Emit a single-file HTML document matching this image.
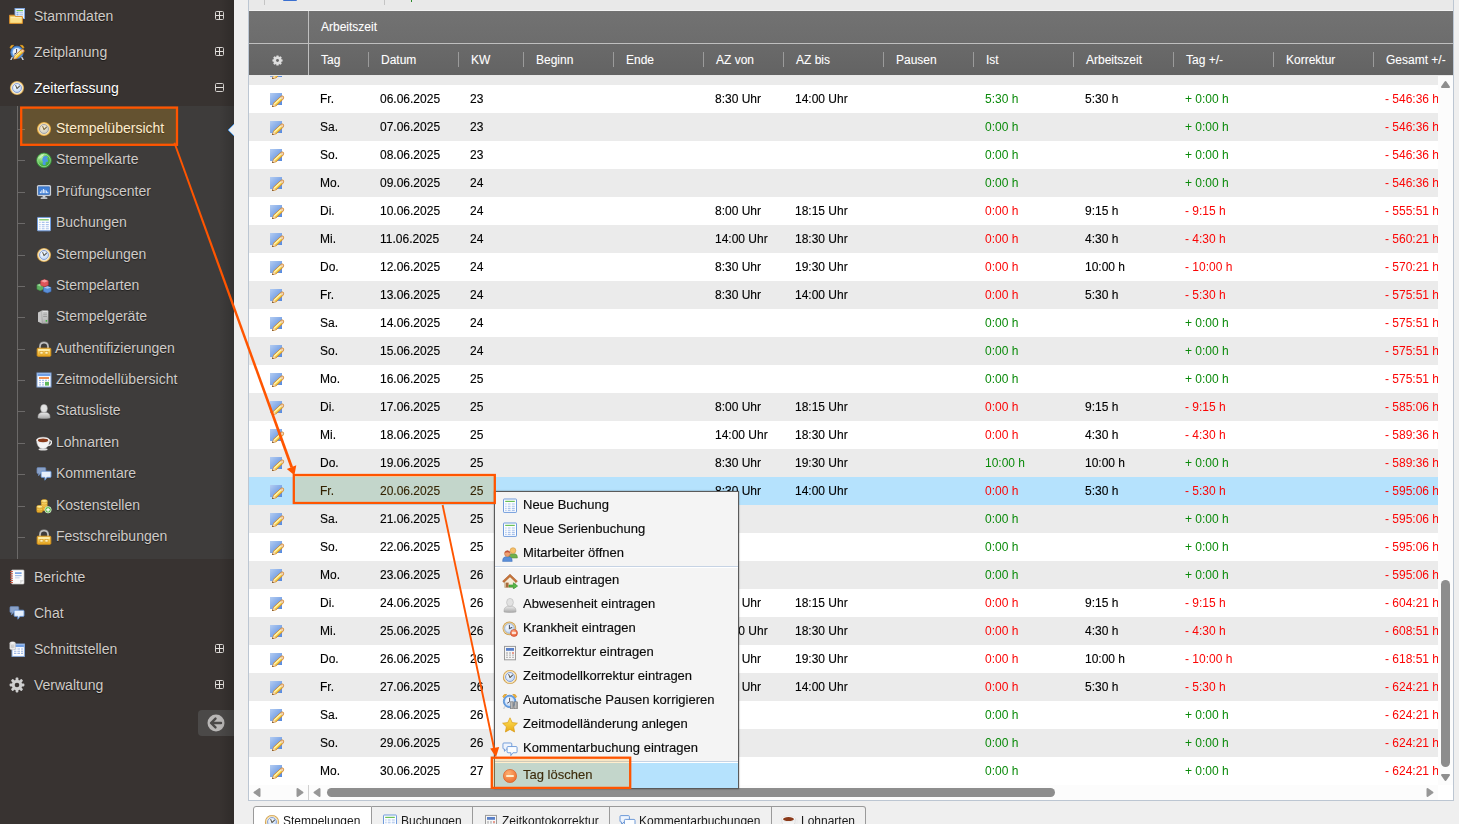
<!DOCTYPE html>
<html lang="de"><head><meta charset="utf-8"><title>Stempelübersicht</title>
<style>
*{box-sizing:border-box;margin:0;padding:0}
html,body{width:1459px;height:824px;overflow:hidden;background:#efefef;font-family:"Liberation Sans",sans-serif;}
body{position:relative}
svg{display:block;overflow:visible}
/* ---------- sidebar ---------- */
#side{position:absolute;left:0;top:0;width:234px;height:824px;background:#383331;overflow:hidden}
#side .sub{position:absolute;left:0;top:106px;width:234px;height:453px;background:#3e3c3b}
#side .vline{position:absolute;left:17px;top:106px;width:1px;height:453px;background:#6b6968}
.m{position:absolute;left:34px;font-size:14px;line-height:18px;color:#d0ccc8;white-space:nowrap;text-shadow:0 1px 1px rgba(0,0,0,.55)}
.m.act{color:#fff}
.mi{position:absolute;left:8px;width:18px;height:18px}
.pm{position:absolute;left:215px;width:9px;height:9px;border:1px solid #d8d5d2;border-radius:1.5px}
.pm:before{content:"";position:absolute;left:0;top:3px;width:7px;height:1px;background:#e6e3e0}
.pm.plus:after{content:"";position:absolute;left:3px;top:0;width:1px;height:7px;background:#e6e3e0}
.s{position:absolute;left:56px;font-size:14px;line-height:18px;color:#cfcbc8;white-space:nowrap;text-shadow:0 1px 1px rgba(0,0,0,.5)}
.s.act{color:#fff}
.si{position:absolute;left:35px;width:17px;height:17px}
.tk{position:absolute;left:18px;width:7px;height:1px;background:#6b6968}
#collapse{position:absolute;left:198px;top:710px;width:36px;height:26px;background:#4b4948;border-radius:4px 0 0 4px}
#ptr{position:absolute;left:226px;top:122px;width:8px;height:16px}
#side .shade{position:absolute;left:219px;top:0;width:15px;height:824px;background:linear-gradient(90deg,rgba(0,0,0,0),rgba(0,0,0,.16))}
/* ---------- content ---------- */
#content{position:absolute;left:0;top:0;width:1459px;height:824px;pointer-events:none}
#panel{position:absolute;left:248px;top:-1px;width:1206px;height:802px;border:1px solid #bcc6d2;background:#e9e9e9}
#hdr{position:absolute;left:249px;top:11px;width:1204px;height:64px;background:linear-gradient(#727272,#6d6d6d 48%,#6a6a6a 52%,#636363);}
#hdr .hl{position:absolute;left:0;top:32px;width:1204px;height:1px;background:#bfbfbf}
#hdr .vl{position:absolute;left:59px;top:0;width:1px;height:64px;background:#bfbfbf}
#hdr .d{position:absolute;top:41px;width:1px;height:15px;background:#9b9b9b}
.h{position:absolute;font-size:12px;line-height:14px;color:#fff;white-space:nowrap;text-shadow:0 0 1px rgba(255,255,255,.25)}
#rows{will-change:transform;position:absolute;left:0;top:0;width:1459px;height:824px;clip:rect(76px,1438px,785px,249px)}
.row{-webkit-text-stroke:.12px;position:absolute;left:249px;width:1189px;height:28px;font-size:12px;line-height:28px;color:#000}
.row.even{background:#fff}
.row.odd{background:#ebebeb}
.row.sel{background:#b5e2fd}
.row .ed{position:absolute;left:20px;top:7px}
.c{position:absolute;top:0;margin-left:-249px;white-space:nowrap}
.c.g{color:#0a8a0a;-webkit-text-stroke:0}
.c.r{color:#fb0505;-webkit-text-stroke:0}
/* scrollbars */
.sbar{position:absolute;background:#fcfcfc}
.thumb{position:absolute;background:#8d8d8d;border-radius:5px}
.tri{position:absolute;width:0;height:0}
/* tabs */
.tab{position:absolute;top:806px;height:22px;background:#f0f0f0;border:1px solid #9a9a9a;border-left:none;font-size:12px;line-height:28px;color:#1a1a1a;white-space:nowrap}
.tab.first{border-left:1px solid #9a9a9a;border-radius:3px 0 0 0;background:#fff}
.tab.last{border-radius:0 3px 0 0}
.tab svg{position:absolute;top:7px}
.tab span{position:absolute;top:0}
/* context menu */
#menu{will-change:transform;position:absolute;left:494px;top:491px;width:245px;height:298px;background:#f4f4f4;border:1px solid #5a5a5a;box-shadow:0 0 1.5px rgba(0,0,0,.45)}
#menu .it{-webkit-text-stroke:.15px;position:absolute;left:28px;font-size:13px;line-height:16px;color:#0c0c0c;white-space:nowrap}
#menu .ic{position:absolute;left:7px;width:16px;height:16px}
#menu .sep{position:absolute;left:0;width:243px;height:2px;border-top:1px solid #c6d3e4;background:#fff}
#menu .hi{position:absolute;left:0;top:271px;width:243px;height:25px;background:#b5e2fd}
/* annotations */
#anno{position:absolute;left:0;top:0;width:1459px;height:824px;pointer-events:none}

</style></head>
<body>
<svg width="0" height="0" style="position:absolute">
<defs>
<linearGradient id="gBlue" x1="0" y1="0" x2="1" y2="1"><stop offset="0" stop-color="#b4cdf2"/><stop offset="1" stop-color="#5488de"/></linearGradient>
<linearGradient id="gPencil" x1="0" y1="0" x2="1" y2="1"><stop offset="0" stop-color="#fff3a0"/><stop offset="1" stop-color="#e6a52a"/></linearGradient>
<radialGradient id="gFace" cx=".4" cy=".35" r=".7"><stop offset="0" stop-color="#ffffff"/><stop offset="1" stop-color="#b9d3f5"/></radialGradient>
<radialGradient id="gGlobe" cx=".35" cy=".3" r=".8"><stop offset="0" stop-color="#b6f0a0"/><stop offset=".6" stop-color="#4cb848"/><stop offset="1" stop-color="#2c8a30"/></radialGradient>
<linearGradient id="gGold" x1="0" y1="0" x2="0" y2="1"><stop offset="0" stop-color="#ffe98a"/><stop offset="1" stop-color="#e9a820"/></linearGradient>
<linearGradient id="gGrey" x1="0" y1="0" x2="0" y2="1"><stop offset="0" stop-color="#e9e9e9"/><stop offset="1" stop-color="#a9a9a9"/></linearGradient>
<linearGradient id="gStar" x1="0" y1="0" x2="0" y2="1"><stop offset="0" stop-color="#ffe45c"/><stop offset="1" stop-color="#e8a914"/></linearGradient>
<radialGradient id="gRed" cx=".4" cy=".3" r=".8"><stop offset="0" stop-color="#ffb08c"/><stop offset="1" stop-color="#e65a34"/></radialGradient>

<!-- row edit icon 18x16 : blue square + pencil -->
<symbol id="i-edit" viewBox="0 0 18 16">
 <rect x="1" y="1" width="12" height="12" fill="url(#gBlue)"/>
 <g transform="translate(3.1,14.9) rotate(-42.5)">
  <path d="M0 0 L3.4 -2.1 H13.2 Q15.6 -2.1 15.6 0 Q15.6 2.1 13.2 2.1 H3.4 Z" fill="#cf8428"/>
  <path d="M3.6 -1.3 H12.4 V1.3 H3.6 Z" fill="#f6dc58"/>
  <path d="M3.6 -1.3 H12.4 V-.1 H3.6 Z" fill="#fff6b4"/>
  <path d="M3.6 .7 H12.4 V1.3 H3.6 Z" fill="#ecbc3a"/>
  <path d="M12.4 -1.4 H13.4 V1.4 H12.4 Z" fill="#ece6de"/>
  <path d="M13.4 -1.4 Q14.9 -1.4 14.9 0 Q14.9 1.4 13.4 1.4 Z" fill="#f8d2b4"/>
  <path d="M.9 0 L3.6 -1.5 V1.5 Z" fill="#f8e2bc"/>
  <path d="M0 0 L1.5 -.85 V.85 Z" fill="#5a3a1a"/>
 </g>
</symbol>

<!-- clock (gold ring) -->
<symbol id="i-clock" viewBox="0 0 16 16">
 <circle cx="8" cy="8" r="7.1" fill="#c8943e"/>
 <circle cx="8" cy="8" r="6.4" fill="#f1d9a2"/>
 <circle cx="8" cy="8" r="5.5" fill="#fbf3dc"/>
 <circle cx="8" cy="8" r="4.5" fill="url(#gFace)" stroke="#7f98d4" stroke-width=".9"/>
 <path d="M6.8 5.6 L8 8.6 L10.5 6.2" fill="none" stroke="#5a5a52" stroke-width="1.1" stroke-linecap="round" stroke-linejoin="round"/>
</symbol>

<!-- folder + document (Stammdaten) -->
<symbol id="i-folder" viewBox="0 0 16 16">
 <rect x="6" y=".5" width="9.5" height="10" fill="#eaf2fd" stroke="#7da4dc" stroke-width="1"/>
 <rect x="7.5" y="2" width="6.5" height="1.2" fill="#6fbf5a"/>
 <rect x="7.5" y="4.3" width="2" height="1" fill="#5a8fdc"/><rect x="10.3" y="4.3" width="3.7" height="1" fill="#9fbbe6"/>
 <rect x="7.5" y="6.3" width="2" height="1" fill="#5a8fdc"/><rect x="10.3" y="6.3" width="3.7" height="1" fill="#9fbbe6"/>
 <path d="M.6 7.2 H5.5 L6.6 8.6 H13.4 V15.4 H.6 Z" fill="#f6cf62" stroke="#d98e2c" stroke-width="1"/>
 <rect x="1.4" y="10" width="11.2" height="4.6" fill="#fbe08a"/>
 <rect x="1.4" y="9.2" width="11.2" height=".9" fill="#fff3c2"/>
</symbol>

<!-- alarm clock + pencil (Zeitplanung) -->
<symbol id="i-alarm" viewBox="0 0 16 16">
 <path d="M1 3.5 Q1.8 .6 4.8 1.2 L2 4.6 Z" fill="#f0b030" stroke="#c98a1a" stroke-width=".6"/>
 <path d="M15 3.5 Q14.2 .6 11.2 1.2 L14 4.6 Z" fill="#f0b030" stroke="#c98a1a" stroke-width=".6"/>
 <path d="M3.2 13.2 L2 15.6 M12.8 13.2 L14 15.6" stroke="#cfd5dc" stroke-width="1.4" stroke-linecap="round"/>
 <circle cx="8" cy="8.4" r="6.2" fill="#5f9be0" stroke="#3d78c6" stroke-width=".8"/>
 <circle cx="8" cy="8.4" r="4.4" fill="url(#gFace)"/>
 <path d="M7.6 5.4 V8.8 L5.6 10" fill="none" stroke="#445" stroke-width="1" stroke-linecap="round"/>
 <g transform="translate(4.2,15.4) rotate(-42)">
  <path d="M0 0 L3 -2 H12.4 Q14.6 -2 14.6 0 Q14.6 2 12.4 2 H3 Z" fill="#cf7f22"/>
  <path d="M3.2 -1.2 H11.6 V1.2 H3.2 Z" fill="#f5d23e"/>
  <path d="M3.2 -1.2 H11.6 V-.2 H3.2 Z" fill="#fff2a0"/>
  <path d="M11.6 -1.3 Q13.9 -1.3 13.9 0 Q13.9 1.3 11.6 1.3 Z" fill="#f6c9a8"/>
  <path d="M.9 0 L3.2 -1.4 V1.4 Z" fill="#f6dcb0"/>
 </g>
</symbol>

<!-- globe (Stempelkarte) -->
<symbol id="i-globe" viewBox="0 0 16 16">
 <circle cx="8" cy="8.4" r="7.3" fill="url(#gGlobe)" stroke="#3a9a3c" stroke-width=".8"/>
 <circle cx="8" cy="8.4" r="6.3" fill="none" stroke="#d6f8c8" stroke-width=".7" opacity=".7"/>
 <path d="M8.6 4 Q10.8 3.6 12.2 5.2 L10.4 6.4 L11.8 7.6 Q12.6 9.4 11.2 10.2 L10 9.4 Q9 10.8 9.8 12.4 Q8.4 13.8 6.8 12.6 Q6 11 7.2 9.8 Q5.8 8.6 6.4 6.8 Q6.8 4.8 8.6 4 Z" fill="#4a96e6"/>
 <path d="M3.4 6.4 Q4.6 3.6 7.6 2.8" fill="none" stroke="#f0ffe6" stroke-width="1" opacity=".8"/>
</symbol>

<!-- monitor chart (Pruefungscenter) -->
<symbol id="i-monitor" viewBox="0 0 16 16">
 <rect x="1.4" y="2.4" width="13.2" height="10" rx=".8" fill="#f4f7fb" stroke="#d8e0ea" stroke-width=".8"/>
 <rect x="2.6" y="3.6" width="10.8" height="7.6" fill="#3f7fd6" stroke="#2c5ea8" stroke-width=".7"/>
 <path d="M4.4 10 V8.4 M5.9 10 V7 M7.4 10 V5.8 M8.9 10 V6.6 M10.4 10 V7.4 M11.8 10 V8.6" stroke="#eaf2ff" stroke-width="1"/>
 <rect x="6.6" y="12.6" width="2.8" height="1.8" fill="#cdd3db"/>
 <rect x="4.6" y="14.2" width="6.8" height="1.3" rx=".5" fill="#e6eaf0"/>
</symbol>

<!-- table (Buchungen) -->
<symbol id="i-table" viewBox="0 0 16 16">
 <rect x="1" y="1" width="14" height="14" fill="#fff" stroke="#86a9dc" stroke-width="1"/>
 <rect x="1.5" y="1.5" width="13" height="3" fill="#8db3ee"/>
 <path d="M3 6.5 H5.2 M6.4 6.5 H9.6 M10.8 6.5 H13 M3 8.7 H5.2 M6.4 8.7 H9.6 M10.8 8.7 H13 M3 10.9 H5.2 M6.4 10.9 H9.6 M10.8 10.9 H13 M3 13.1 H5.2 M6.4 13.1 H9.6 M10.8 13.1 H13" stroke="#9db8e6" stroke-width="1.1"/>
</symbol>

<!-- bricks (Stempelarten) -->
<symbol id="i-bricks" viewBox="0 0 17 16">
 <path d="M1 7 L4.5 5.6 L8 7 V11.4 L4.5 13 L1 11.4 Z" fill="#5fb060" stroke="#3f8a44" stroke-width=".6"/>
 <path d="M1 7 L4.5 8.4 L8 7 L4.5 5.6 Z" fill="#9bd89a"/>
 <path d="M8 9.6 L12 8.2 L16 9.6 V13.8 L12 15.4 L8 13.8 Z" fill="#5a8fd8" stroke="#3b6cb8" stroke-width=".6"/>
 <path d="M8 9.6 L12 11 L16 9.6 L12 8.2 Z" fill="#a6c6f2"/>
 <path d="M5 2.6 L9 1 L13 2.6 V7.2 L9 8.8 L5 7.2 Z" fill="#e0555a" stroke="#b8343a" stroke-width=".6"/>
 <path d="M5 2.6 L9 4.2 L13 2.6 L9 1 Z" fill="#f6a0a2"/>
</symbol>

<!-- server (Stempelgeraete) -->
<symbol id="i-server" viewBox="0 0 16 16">
 <path d="M3 3.4 L7 1.6 V14.6 L3 12.8 Z" fill="#c6c6c6"/>
 <path d="M7 1.6 H12.6 Q13.2 1.6 13.2 2.2 V14 Q13.2 14.6 12.6 14.6 H7 Z" fill="url(#gGrey)" stroke="#8d8d8d" stroke-width=".5"/>
 <path d="M8.2 4 H12 M8.2 5.8 H12 M8.2 7.6 H12" stroke="#8a8a8a" stroke-width=".8"/>
 <circle cx="11.4" cy="11.8" r=".9" fill="#38b838"/>
</symbol>

<!-- lock -->
<symbol id="i-lock" viewBox="0 0 16 16">
 <path d="M4 8 V5.4 Q4 1.6 8 1.6 Q12 1.6 12 5.4 V8" fill="none" stroke="#9a9a9a" stroke-width="2"/>
 <path d="M4 8 V5.4 Q4 1.6 8 1.6 Q12 1.6 12 5.4 V8" fill="none" stroke="#d6d6d6" stroke-width=".8"/>
 <rect x="1.2" y="7.2" width="13.6" height="8" rx=".8" fill="url(#gGold)" stroke="#d8941c" stroke-width="1"/>
 <rect x="2.4" y="8.4" width="11.2" height="1.3" fill="#fff4c0"/>
 <rect x="4" y="10.6" width="3" height="2.4" fill="#fff2b8" stroke="#c98a1a" stroke-width=".5"/>
 <rect x="9" y="10.6" width="3" height="2.4" fill="#fff2b8" stroke="#c98a1a" stroke-width=".5"/>
</symbol>

<!-- calendar (Zeitmodelluebersicht) -->
<symbol id="i-cal" viewBox="0 0 16 16">
 <rect x="1" y="1" width="14" height="14" fill="#fff" stroke="#7fa3dc" stroke-width="1"/>
 <rect x="1.5" y="1.5" width="13" height="2.6" fill="#6f9fe6"/>
 <rect x="3" y="5" width="10" height="2" fill="#f09050"/>
 <path d="M3 8.4 H5 M6 8.4 H8 M9 8.4 H11 M12 8.4 H13 M3 10.6 H5 M6 10.6 H8 M3 12.8 H5 M6 12.8 H8" stroke="#a9c0e8" stroke-width="1.2"/>
 <rect x="9" y="9.8" width="4" height="3.8" fill="#5fb85a"/>
</symbol>

<!-- user gray -->
<symbol id="i-user" viewBox="0 0 16 16">
 <path d="M2 15 Q1.6 10.2 5.4 9.4 H10.6 Q14.4 10.2 14 15 Q8 16 2 15 Z" fill="url(#gGrey)" stroke="#a2a2a2" stroke-width=".5"/>
 <ellipse cx="8" cy="5.4" rx="3.4" ry="4" fill="#e2e2e2" stroke="#adadad" stroke-width=".5"/>
</symbol>

<!-- cup (Lohnarten) -->
<symbol id="i-cup" viewBox="0 0 17 16">
 <path d="M12.8 5.6 Q16.8 5 16.4 7.8 Q16 10.4 12.2 10.6" fill="none" stroke="#ececec" stroke-width="1.5"/>
 <path d="M.6 4.6 Q.6 13.6 7.5 14 Q14.4 13.6 14.4 4.6 Z" fill="#f4f4f4" stroke="#cfcfcf" stroke-width=".5"/>
 <ellipse cx="7.5" cy="4.8" rx="6.9" ry="2.9" fill="#fcfcfc" stroke="#d8d8d8" stroke-width=".5"/>
 <ellipse cx="7.5" cy="5.1" rx="5.5" ry="2" fill="#8a3a1a"/>
 <ellipse cx="7.5" cy="14.8" rx="4.8" ry="1.1" fill="#dedede"/>
</symbol>

<!-- comments -->
<symbol id="i-comments" viewBox="0 0 17 16">
 <path d="M1 2.2 Q1 1.2 2 1.2 H9.4 Q10.4 1.2 10.4 2.2 V6.6 Q10.4 7.6 9.4 7.6 H5 L2.6 10 V7.6 H2 Q1 7.6 1 6.6 Z" fill="#8aa2c8" stroke="#6482b4" stroke-width=".7"/>
 <path d="M5.4 6 Q5.4 5 6.4 5 H15 Q16 5 16 6 V10.6 Q16 11.6 15 11.6 H11.6 L9.4 14.6 V11.6 H6.4 Q5.4 11.6 5.4 10.6 Z" fill="#e6f0fd" stroke="#5f8fd4" stroke-width=".9"/>
</symbol>

<!-- coins + plus (Kostenstellen) -->
<symbol id="i-coins" viewBox="0 0 17 16">
 <g stroke="#c98e14" stroke-width=".5">
 <rect x="5.6" y="1.4" width="6.4" height="11.6" rx="1.6" fill="url(#gGold)"/>
 <path d="M5.6 4 Q8.8 5.4 12 4 M5.6 6.4 Q8.8 7.8 12 6.4 M5.6 8.8 Q8.8 10.2 12 8.8" fill="none"/>
 <ellipse cx="8.8" cy="2.6" rx="3.2" ry="1.3" fill="#fff0a0"/>
 <rect x=".8" y="7.6" width="6.2" height="7.4" rx="1.6" fill="url(#gGold)"/>
 <path d="M.8 10.4 Q3.9 11.8 7 10.4 M.8 12.6 Q3.9 14 7 12.6" fill="none"/>
 <ellipse cx="3.9" cy="8.8" rx="3.1" ry="1.3" fill="#fff0a0"/>
 </g>
 <circle cx="12.8" cy="12" r="3.4" fill="#5cb84c" stroke="#e8f6e0" stroke-width=".8"/>
 <path d="M12.8 10 V14 M10.8 12 H14.8" stroke="#fff" stroke-width="1.3"/>
</symbol>

<!-- report notebook (Berichte) -->
<symbol id="i-report" viewBox="0 0 16 16">
 <rect x="2.6" y="1" width="12.4" height="14" rx=".8" fill="#fbfbfb" stroke="#c8c8c8" stroke-width=".7"/>
 <path d="M1 2.6 H4 M1 4.8 H4 M1 7 H4 M1 9.2 H4 M1 11.4 H4 M1 13.6 H4" stroke="#c0503a" stroke-width="1"/>
 <rect x="6" y="3.4" width="6.6" height="1.4" fill="#5a8fdc"/>
 <rect x="6" y="6" width="6.6" height="1.2" fill="#9fbbe6"/>
 <rect x="6" y="8.2" width="4.6" height="1.2" fill="#c9d6ea"/>
 <path d="M11 15 L15 11 H11 Z" fill="#dedede"/>
</symbol>

<!-- sheet + db (Schnittstellen) -->
<symbol id="i-sheet" viewBox="0 0 16 16">
 <rect x="3" y="3" width="12.4" height="12.4" fill="#fff" stroke="#86a9dc" stroke-width="1"/>
 <rect x="3.5" y="3.5" width="11.4" height="2.6" fill="#6f9fe6"/>
 <path d="M5 8 H7.4 M8.4 8 H11 M12 8 H14 M5 10.2 H7.4 M8.4 10.2 H11 M12 10.2 H14 M5 12.4 H7.4 M8.4 12.4 H11 M12 12.4 H14" stroke="#9db8e6" stroke-width="1.1"/>
 <path d="M.8 2 V7.6 Q.8 8.8 3.6 8.8 Q6.4 8.8 6.4 7.6 V2 Z" fill="#ececec" stroke="#b8b8b8" stroke-width=".5"/>
 <ellipse cx="3.6" cy="2" rx="2.8" ry="1.2" fill="#fafafa" stroke="#b8b8b8" stroke-width=".5"/>
 <path d="M2.4 4 V7 M3.6 4.2 V7.2 M4.8 4 V7" stroke="#b0b0b0" stroke-width=".6"/>
</symbol>

<!-- gear -->
<symbol id="i-gear" viewBox="0 0 16 16">
 <g fill="#cfcfcf">
 <circle cx="8" cy="8" r="5.2"/>
 <rect x="6.6" y=".6" width="2.8" height="14.8" rx=".8"/>
 <rect x="6.6" y=".6" width="2.8" height="14.8" rx=".8" transform="rotate(45 8 8)"/>
 <rect x="6.6" y=".6" width="2.8" height="14.8" rx=".8" transform="rotate(90 8 8)"/>
 <rect x="6.6" y=".6" width="2.8" height="14.8" rx=".8" transform="rotate(135 8 8)"/>
 </g>
 <circle cx="8" cy="8" r="2.3" fill="#383331"/>
</symbol>
<symbol id="i-gearh" viewBox="0 0 16 16">
 <g fill="#dedede">
 <circle cx="8" cy="8" r="5.4"/>
 <rect x="6.2" y=".6" width="3.6" height="14.8" rx=".9"/>
 <rect x="6.2" y=".6" width="3.6" height="14.8" rx=".9" transform="rotate(45 8 8)"/>
 <rect x="6.2" y=".6" width="3.6" height="14.8" rx=".9" transform="rotate(90 8 8)"/>
 <rect x="6.2" y=".6" width="3.6" height="14.8" rx=".9" transform="rotate(135 8 8)"/>
 </g>
 <circle cx="8" cy="8" r="2.1" fill="#686868"/>
</symbol>

<!-- users (Mitarbeiter oeffnen) -->
<symbol id="i-users" viewBox="0 0 16 16">
 <path d="M6.6 12 Q6.4 8.4 9 7.8 H13 Q15.6 8.4 15.4 12 Z" fill="#6fb04c" stroke="#4a8a30" stroke-width=".5"/>
 <circle cx="11" cy="4.6" r="2.9" fill="#f6c06a" stroke="#c98a30" stroke-width=".5"/>
 <path d="M.6 15.4 Q.4 11.4 3.2 10.8 H7.6 Q10.4 11.4 10.2 15.4 Z" fill="#5a8fd8" stroke="#3b6cb8" stroke-width=".5"/>
 <circle cx="5.4" cy="7.6" r="2.9" fill="#f0a070" stroke="#b86a3a" stroke-width=".5"/>
 <path d="M2.6 7 Q3 4.4 5.4 4.4 Q7.8 4.4 8.2 7 Q5.4 5.6 2.6 7 Z" fill="#c0503a"/>
</symbol>

<!-- house (Urlaub) -->
<symbol id="i-house" viewBox="0 0 16 16">
 <path d="M2.6 7.4 V14.4 H13.4 V7.4 L8 2.6 Z" fill="#f6ecd8" stroke="#b8a47a" stroke-width=".6"/>
 <path d="M.6 8.2 L8 1.2 L15.4 8.2 L14 9.4 L8 3.8 L2 9.4 Z" fill="#c8743a" stroke="#9a4e1e" stroke-width=".5"/>
 <rect x="3.6" y="9.6" width="3" height="4.8" fill="#a86a3a"/>
 <path d="M7 12 H11.4 V9.8 L15.6 13 L11.4 16 V14 H7 Z" fill="#58b848" stroke="#2f8a2a" stroke-width=".6"/>
</symbol>

<!-- calculator (Zeitkorrektur) -->
<symbol id="i-calc" viewBox="0 0 16 16">
 <rect x="2.5" y="1.4" width="11" height="13.4" fill="#f6f6f6" stroke="#9a9a9a" stroke-width="1"/>
 <rect x="4" y="3" width="8" height="2.8" fill="#5a80c8"/>
 <path d="M4.2 8 H5.8 M7.2 8 H8.8 M4.2 10.2 H5.8 M7.2 10.2 H8.8 M10.2 10.2 H11.8 M4.2 12.4 H5.8 M7.2 12.4 H8.8 M10.2 12.4 H11.8" stroke="#adadad" stroke-width="1.3"/>
 <path d="M10.2 8 H11.8" stroke="#e0604a" stroke-width="1.3"/>
</symbol>

<!-- clock with red minus (Krankheit) -->
<symbol id="i-clockdel" viewBox="0 0 16 16">
 <circle cx="7.4" cy="7.4" r="6.8" fill="#c99a4a"/>
 <circle cx="7.4" cy="7.4" r="6.1" fill="#ecd39a"/>
 <circle cx="7.4" cy="7.4" r="4.8" fill="url(#gFace)" stroke="#8fa6cf" stroke-width=".7"/>
 <path d="M7.4 4.2 V7.7 L9.8 6.5" fill="none" stroke="#4a5568" stroke-width="1.1" stroke-linecap="round"/>
 <circle cx="12" cy="12" r="3.5" fill="url(#gRed)" stroke="#c03010" stroke-width=".5"/>
 <rect x="10" y="11.3" width="4" height="1.4" fill="#fff"/>
</symbol>

<!-- alarm + pause (Automatische Pausen) -->
<symbol id="i-alarmpause" viewBox="0 0 16 16">
 <path d="M.8 3.7 Q1.6 .8 4.6 1.4 L1.8 4.8 Z" fill="#f4b83a" stroke="#c98a1a" stroke-width=".6"/>
 <path d="M14.6 3.7 Q13.8 .8 10.8 1.4 L13.6 4.8 Z" fill="#f4b83a" stroke="#c98a1a" stroke-width=".6"/>
 <path d="M3 13.4 L1.8 15.6" stroke="#cfd5dc" stroke-width="1.4" stroke-linecap="round"/>
 <circle cx="7.6" cy="8.4" r="6.2" fill="#6aa4e6" stroke="#4a84cc" stroke-width=".8"/>
 <circle cx="7.6" cy="8.4" r="4.7" fill="url(#gFace)"/>
 <path d="M7.6 5.2 V8.8 L5.6 10" fill="none" stroke="#556" stroke-width="1" stroke-linecap="round"/>
 <rect x="8.6" y="8.8" width="3" height="7" fill="#a2a2a2" stroke="#6e6e6e" stroke-width=".5"/>
 <rect x="12.6" y="8.8" width="3" height="7" fill="#a2a2a2" stroke="#6e6e6e" stroke-width=".5"/>
 <path d="M9.4 9.4 V15.2 M13.4 9.4 V15.2" stroke="#c8c8c8" stroke-width=".7"/>
</symbol>

<!-- table2 (menu) -->
<symbol id="i-table2" viewBox="0 0 16 16">
 <rect x="1.5" y="1" width="13" height="13.4" rx=".6" fill="#fdfeff" stroke="#6f9bdc" stroke-width="1"/>
 <rect x="3.2" y="2.8" width="9.6" height="1.2" fill="#6cc058"/>
 <path d="M3.2 6 H4.6 M5.8 6 H8.6 M9.8 6 H12.8 M3.2 8.2 H4.6 M5.8 8.2 H8.6 M9.8 8.2 H12.8 M3.2 10.4 H4.6 M5.8 10.4 H8.6 M9.8 10.4 H12.8 M3.2 12.4 H4.6 M5.8 12.4 H8.6 M9.8 12.4 H12.8" stroke="#a9c2ec" stroke-width="1.1"/>
</symbol>
<!-- star -->
<symbol id="i-star" viewBox="0 0 16 16">
 <path d="M8 .8 L10.2 5.6 L15.4 6.2 L11.6 9.8 L12.6 15 L8 12.4 L3.4 15 L4.4 9.8 L.6 6.2 L5.8 5.6 Z" fill="url(#gStar)" stroke="#d89a14" stroke-width=".7" stroke-linejoin="round"/>
</symbol>

<!-- comments light (menu) -->
<symbol id="i-comments2" viewBox="0 0 17 16">
 <path d="M1 2.6 Q1 1.6 2 1.6 H9.4 Q10.4 1.6 10.4 2.6 V7 Q10.4 8 9.4 8 H5 L2.6 10.4 V8 H2 Q1 8 1 7 Z" fill="#eef4fd" stroke="#5f8fd4" stroke-width=".9"/>
 <path d="M5.4 6.4 Q5.4 5.4 6.4 5.4 H15 Q16 5.4 16 6.4 V11 Q16 12 15 12 H11.6 L9.4 15 V12 H6.4 Q5.4 12 5.4 11 Z" fill="#fbfdff" stroke="#5f8fd4" stroke-width=".9"/>
</symbol>

<!-- delete -->
<symbol id="i-del" viewBox="0 0 16 16">
 <circle cx="8" cy="8" r="6.6" fill="url(#gRed)" stroke="#d0401c" stroke-width=".6"/>
 <rect x="4.2" y="6.9" width="7.6" height="2.2" rx=".4" fill="#fff"/>
</symbol>
</defs>
</svg>
<div id="side">
<div class="sub"></div><div class="vline"></div>
<svg class="mi" style="top:7px" viewBox="0 0 18 18"><use href="#i-folder" x="1" y="1" width="16" height="16"/></svg><div class="m" style="top:7px">Stammdaten</div><div class="pm plus" style="top:11px"></div>
<svg class="mi" style="top:43px" viewBox="0 0 18 18"><use href="#i-alarm" x="1" y="1" width="16" height="16"/></svg><div class="m" style="top:43px">Zeitplanung</div><div class="pm plus" style="top:47px"></div>
<svg class="mi" style="top:79px" viewBox="0 0 18 18"><use href="#i-clock" x="1" y="1" width="16" height="16"/></svg><div class="m act" style="top:79px">Zeiterfassung</div><div class="pm minus" style="top:83px"></div>
<svg class="mi" style="top:568px" viewBox="0 0 18 18"><use href="#i-report" x="1" y="1" width="16" height="16"/></svg><div class="m" style="top:568px">Berichte</div>
<svg class="mi" style="top:604px" viewBox="0 0 18 18"><use href="#i-comments" x="1" y="1" width="16" height="16"/></svg><div class="m" style="top:604px">Chat</div>
<svg class="mi" style="top:640px" viewBox="0 0 18 18"><use href="#i-sheet" x="1" y="1" width="16" height="16"/></svg><div class="m" style="top:640px">Schnittstellen</div><div class="pm plus" style="top:644px"></div>
<svg class="mi" style="top:676px" viewBox="0 0 18 18"><use href="#i-gear" x="1" y="1" width="16" height="16"/></svg><div class="m" style="top:676px">Verwaltung</div><div class="pm plus" style="top:680px"></div>
<div class="tk" style="top:129px"></div><svg class="si" style="top:121px" viewBox="0 0 17 17"><use href="#i-clock" x="1" y="0" width="16" height="16"/></svg><div class="s act" style="top:119px;left:56px">Stempelübersicht</div>
<div class="tk" style="top:160px"></div><svg class="si" style="top:152px" viewBox="0 0 17 17"><use href="#i-globe" x="1" y="0" width="16" height="16"/></svg><div class="s" style="top:150px;left:56px">Stempelkarte</div>
<div class="tk" style="top:192px"></div><svg class="si" style="top:184px" viewBox="0 0 17 17"><use href="#i-monitor" x="1" y="-0.8" width="16" height="16"/></svg><div class="s" style="top:182px;left:56px">Prüfungscenter</div>
<div class="tk" style="top:223px"></div><svg class="si" style="top:215px" viewBox="0 0 17 17"><use href="#i-table2" x="1" y="1.4" width="16" height="16"/></svg><div class="s" style="top:213px;left:56px">Buchungen</div>
<div class="tk" style="top:255px"></div><svg class="si" style="top:247px" viewBox="0 0 17 17"><use href="#i-clock" x="1" y="0" width="16" height="16"/></svg><div class="s" style="top:245px;left:56px">Stempelungen</div>
<div class="tk" style="top:286px"></div><svg class="si" style="top:278px" viewBox="0 0 17 17"><use href="#i-bricks" x="1" y="0" width="16" height="16"/></svg><div class="s" style="top:276px;left:56px">Stempelarten</div>
<div class="tk" style="top:317px"></div><svg class="si" style="top:309px" viewBox="0 0 17 17"><use href="#i-server" x="0" y="0" width="16" height="16"/></svg><div class="s" style="top:307px;left:56px">Stempelgeräte</div>
<div class="tk" style="top:349px"></div><svg class="si" style="top:341px" viewBox="0 0 17 17"><use href="#i-lock" x="1" y="0" width="16" height="16"/></svg><div class="s" style="top:339px;left:55px">Authentifizierungen</div>
<div class="tk" style="top:380px"></div><svg class="si" style="top:372px" viewBox="0 0 17 17"><use href="#i-cal" x="1" y="0" width="16" height="16"/></svg><div class="s" style="top:370px;left:56px">Zeitmodellübersicht</div>
<div class="tk" style="top:411px"></div><svg class="si" style="top:403px" viewBox="0 0 17 17"><use href="#i-user" x="1" y="0" width="16" height="16"/></svg><div class="s" style="top:401px;left:56px">Statusliste</div>
<div class="tk" style="top:443px"></div><svg class="si" style="top:435px" viewBox="0 0 17 17"><use href="#i-cup" x="1" y="0" width="16" height="16"/></svg><div class="s" style="top:433px;left:56px">Lohnarten</div>
<div class="tk" style="top:474px"></div><svg class="si" style="top:466px" viewBox="0 0 17 17"><use href="#i-comments" x="1" y="0" width="16" height="16"/></svg><div class="s" style="top:464px;left:56px">Kommentare</div>
<div class="tk" style="top:506px"></div><svg class="si" style="top:498px" viewBox="0 0 17 17"><use href="#i-coins" x="1" y="0" width="16" height="16"/></svg><div class="s" style="top:496px;left:56px">Kostenstellen</div>
<div class="tk" style="top:537px"></div><svg class="si" style="top:529px" viewBox="0 0 17 17"><use href="#i-lock" x="1" y="0" width="16" height="16"/></svg><div class="s" style="top:527px;left:56px">Festschreibungen</div>
<div id="collapse"><svg width="36" height="26" viewBox="0 0 36 26"><circle cx="18" cy="13" r="8.5" fill="#b9b7b6"/><path d="M23 13 H13.5 M17.5 8.6 L13 13 L17.5 17.4" fill="none" stroke="#4b4948" stroke-width="2.4" stroke-linecap="round" stroke-linejoin="round"/></svg></div>
<div class="shade"></div><svg id="ptr" viewBox="0 0 8 16"><path d="M8.5 1.6 L2.1 8 L8.5 14.4 Z" fill="#efefef" stroke="#3f8fe0" stroke-width="1"/></svg>
</div>
<div id="content">
<div id="panel"></div>
<div style="position:absolute;left:249px;top:10px;width:1204px;height:1px;background:#f3f3f3"></div>
<div id="topbar">
 <div style="position:absolute;left:264px;top:0;width:1px;height:5px;background:#c4c4c4"></div>
 <div style="position:absolute;left:384px;top:0;width:1px;height:5px;background:#c4c4c4"></div>
 <div style="position:absolute;left:283px;top:0;width:14px;height:1px;background:#3a6fd0;border-radius:0 0 1px 1px"></div>
 <div style="position:absolute;left:411px;top:0;width:1px;height:2px;background:#2a8a2a"></div>
</div>
<div id="hdr">
 <div class="hl"></div><div class="vl"></div>
 <svg style="position:absolute;left:22.5px;top:43.5px" width="11" height="11" viewBox="0 0 16 16"><use href="#i-gearh"/></svg>
 <div class="h" style="left:72px;top:9px">Arbeitszeit</div>
 <div class="h" style="left:72px;top:42px">Tag</div>
 <div class="d" style="left:119px"></div><div class="h" style="left:132px;top:42px">Datum</div>
 <div class="d" style="left:209px"></div><div class="h" style="left:222px;top:42px">KW</div>
 <div class="d" style="left:274px"></div><div class="h" style="left:287px;top:42px">Beginn</div>
 <div class="d" style="left:364px"></div><div class="h" style="left:377px;top:42px">Ende</div>
 <div class="d" style="left:454px"></div><div class="h" style="left:467px;top:42px">AZ von</div>
 <div class="d" style="left:534px"></div><div class="h" style="left:547px;top:42px">AZ bis</div>
 <div class="d" style="left:634px"></div><div class="h" style="left:647px;top:42px">Pausen</div>
 <div class="d" style="left:724px"></div><div class="h" style="left:737px;top:42px">Ist</div>
 <div class="d" style="left:824px"></div><div class="h" style="left:837px;top:42px">Arbeitszeit</div>
 <div class="d" style="left:924px"></div><div class="h" style="left:937px;top:42px">Tag +/-</div>
 <div class="d" style="left:1024px"></div><div class="h" style="left:1037px;top:42px">Korrektur</div>
 <div class="d" style="left:1124px"></div><div class="h" style="left:1137px;top:42px">Gesamt +/-</div>
</div>
<div id="rows">
<div class="row odd" style="top:57px"><svg class="ed" width="18" height="16"><use href="#i-edit"/></svg></div>
<div class="row even" style="top:85px"><svg class="ed" width="18" height="16"><use href="#i-edit"/></svg><span class="c" style="left:320px">Fr.</span><span class="c" style="left:380px">06.06.2025</span><span class="c" style="left:470px">23</span><span class="c" style="left:715px">8:30 Uhr</span><span class="c" style="left:795px">14:00 Uhr</span><span class="c g" style="left:985px">5:30 h</span><span class="c" style="left:1085px">5:30 h</span><span class="c g" style="left:1185px">+ 0:00 h</span><span class="c r" style="left:1385px">- 546:36 h</span></div>
<div class="row odd" style="top:113px"><svg class="ed" width="18" height="16"><use href="#i-edit"/></svg><span class="c" style="left:320px">Sa.</span><span class="c" style="left:380px">07.06.2025</span><span class="c" style="left:470px">23</span><span class="c g" style="left:985px">0:00 h</span><span class="c g" style="left:1185px">+ 0:00 h</span><span class="c r" style="left:1385px">- 546:36 h</span></div>
<div class="row even" style="top:141px"><svg class="ed" width="18" height="16"><use href="#i-edit"/></svg><span class="c" style="left:320px">So.</span><span class="c" style="left:380px">08.06.2025</span><span class="c" style="left:470px">23</span><span class="c g" style="left:985px">0:00 h</span><span class="c g" style="left:1185px">+ 0:00 h</span><span class="c r" style="left:1385px">- 546:36 h</span></div>
<div class="row odd" style="top:169px"><svg class="ed" width="18" height="16"><use href="#i-edit"/></svg><span class="c" style="left:320px">Mo.</span><span class="c" style="left:380px">09.06.2025</span><span class="c" style="left:470px">24</span><span class="c g" style="left:985px">0:00 h</span><span class="c g" style="left:1185px">+ 0:00 h</span><span class="c r" style="left:1385px">- 546:36 h</span></div>
<div class="row even" style="top:197px"><svg class="ed" width="18" height="16"><use href="#i-edit"/></svg><span class="c" style="left:320px">Di.</span><span class="c" style="left:380px">10.06.2025</span><span class="c" style="left:470px">24</span><span class="c" style="left:715px">8:00 Uhr</span><span class="c" style="left:795px">18:15 Uhr</span><span class="c r" style="left:985px">0:00 h</span><span class="c" style="left:1085px">9:15 h</span><span class="c r" style="left:1185px">- 9:15 h</span><span class="c r" style="left:1385px">- 555:51 h</span></div>
<div class="row odd" style="top:225px"><svg class="ed" width="18" height="16"><use href="#i-edit"/></svg><span class="c" style="left:320px">Mi.</span><span class="c" style="left:380px">11.06.2025</span><span class="c" style="left:470px">24</span><span class="c" style="left:715px">14:00 Uhr</span><span class="c" style="left:795px">18:30 Uhr</span><span class="c r" style="left:985px">0:00 h</span><span class="c" style="left:1085px">4:30 h</span><span class="c r" style="left:1185px">- 4:30 h</span><span class="c r" style="left:1385px">- 560:21 h</span></div>
<div class="row even" style="top:253px"><svg class="ed" width="18" height="16"><use href="#i-edit"/></svg><span class="c" style="left:320px">Do.</span><span class="c" style="left:380px">12.06.2025</span><span class="c" style="left:470px">24</span><span class="c" style="left:715px">8:30 Uhr</span><span class="c" style="left:795px">19:30 Uhr</span><span class="c r" style="left:985px">0:00 h</span><span class="c" style="left:1085px">10:00 h</span><span class="c r" style="left:1185px">- 10:00 h</span><span class="c r" style="left:1385px">- 570:21 h</span></div>
<div class="row odd" style="top:281px"><svg class="ed" width="18" height="16"><use href="#i-edit"/></svg><span class="c" style="left:320px">Fr.</span><span class="c" style="left:380px">13.06.2025</span><span class="c" style="left:470px">24</span><span class="c" style="left:715px">8:30 Uhr</span><span class="c" style="left:795px">14:00 Uhr</span><span class="c r" style="left:985px">0:00 h</span><span class="c" style="left:1085px">5:30 h</span><span class="c r" style="left:1185px">- 5:30 h</span><span class="c r" style="left:1385px">- 575:51 h</span></div>
<div class="row even" style="top:309px"><svg class="ed" width="18" height="16"><use href="#i-edit"/></svg><span class="c" style="left:320px">Sa.</span><span class="c" style="left:380px">14.06.2025</span><span class="c" style="left:470px">24</span><span class="c g" style="left:985px">0:00 h</span><span class="c g" style="left:1185px">+ 0:00 h</span><span class="c r" style="left:1385px">- 575:51 h</span></div>
<div class="row odd" style="top:337px"><svg class="ed" width="18" height="16"><use href="#i-edit"/></svg><span class="c" style="left:320px">So.</span><span class="c" style="left:380px">15.06.2025</span><span class="c" style="left:470px">24</span><span class="c g" style="left:985px">0:00 h</span><span class="c g" style="left:1185px">+ 0:00 h</span><span class="c r" style="left:1385px">- 575:51 h</span></div>
<div class="row even" style="top:365px"><svg class="ed" width="18" height="16"><use href="#i-edit"/></svg><span class="c" style="left:320px">Mo.</span><span class="c" style="left:380px">16.06.2025</span><span class="c" style="left:470px">25</span><span class="c g" style="left:985px">0:00 h</span><span class="c g" style="left:1185px">+ 0:00 h</span><span class="c r" style="left:1385px">- 575:51 h</span></div>
<div class="row odd" style="top:393px"><svg class="ed" width="18" height="16"><use href="#i-edit"/></svg><span class="c" style="left:320px">Di.</span><span class="c" style="left:380px">17.06.2025</span><span class="c" style="left:470px">25</span><span class="c" style="left:715px">8:00 Uhr</span><span class="c" style="left:795px">18:15 Uhr</span><span class="c r" style="left:985px">0:00 h</span><span class="c" style="left:1085px">9:15 h</span><span class="c r" style="left:1185px">- 9:15 h</span><span class="c r" style="left:1385px">- 585:06 h</span></div>
<div class="row even" style="top:421px"><svg class="ed" width="18" height="16"><use href="#i-edit"/></svg><span class="c" style="left:320px">Mi.</span><span class="c" style="left:380px">18.06.2025</span><span class="c" style="left:470px">25</span><span class="c" style="left:715px">14:00 Uhr</span><span class="c" style="left:795px">18:30 Uhr</span><span class="c r" style="left:985px">0:00 h</span><span class="c" style="left:1085px">4:30 h</span><span class="c r" style="left:1185px">- 4:30 h</span><span class="c r" style="left:1385px">- 589:36 h</span></div>
<div class="row odd" style="top:449px"><svg class="ed" width="18" height="16"><use href="#i-edit"/></svg><span class="c" style="left:320px">Do.</span><span class="c" style="left:380px">19.06.2025</span><span class="c" style="left:470px">25</span><span class="c" style="left:715px">8:30 Uhr</span><span class="c" style="left:795px">19:30 Uhr</span><span class="c g" style="left:985px">10:00 h</span><span class="c" style="left:1085px">10:00 h</span><span class="c g" style="left:1185px">+ 0:00 h</span><span class="c r" style="left:1385px">- 589:36 h</span></div>
<div class="row sel" style="top:477px"><svg class="ed" width="18" height="16"><use href="#i-edit"/></svg><span class="c" style="left:320px">Fr.</span><span class="c" style="left:380px">20.06.2025</span><span class="c" style="left:470px">25</span><span class="c" style="left:715px">8:30 Uhr</span><span class="c" style="left:795px">14:00 Uhr</span><span class="c r" style="left:985px">0:00 h</span><span class="c" style="left:1085px">5:30 h</span><span class="c r" style="left:1185px">- 5:30 h</span><span class="c r" style="left:1385px">- 595:06 h</span></div>
<div class="row odd" style="top:505px"><svg class="ed" width="18" height="16"><use href="#i-edit"/></svg><span class="c" style="left:320px">Sa.</span><span class="c" style="left:380px">21.06.2025</span><span class="c" style="left:470px">25</span><span class="c g" style="left:985px">0:00 h</span><span class="c g" style="left:1185px">+ 0:00 h</span><span class="c r" style="left:1385px">- 595:06 h</span></div>
<div class="row even" style="top:533px"><svg class="ed" width="18" height="16"><use href="#i-edit"/></svg><span class="c" style="left:320px">So.</span><span class="c" style="left:380px">22.06.2025</span><span class="c" style="left:470px">25</span><span class="c g" style="left:985px">0:00 h</span><span class="c g" style="left:1185px">+ 0:00 h</span><span class="c r" style="left:1385px">- 595:06 h</span></div>
<div class="row odd" style="top:561px"><svg class="ed" width="18" height="16"><use href="#i-edit"/></svg><span class="c" style="left:320px">Mo.</span><span class="c" style="left:380px">23.06.2025</span><span class="c" style="left:470px">26</span><span class="c g" style="left:985px">0:00 h</span><span class="c g" style="left:1185px">+ 0:00 h</span><span class="c r" style="left:1385px">- 595:06 h</span></div>
<div class="row even" style="top:589px"><svg class="ed" width="18" height="16"><use href="#i-edit"/></svg><span class="c" style="left:320px">Di.</span><span class="c" style="left:380px">24.06.2025</span><span class="c" style="left:470px">26</span><span class="c" style="left:715px">8:00 Uhr</span><span class="c" style="left:795px">18:15 Uhr</span><span class="c r" style="left:985px">0:00 h</span><span class="c" style="left:1085px">9:15 h</span><span class="c r" style="left:1185px">- 9:15 h</span><span class="c r" style="left:1385px">- 604:21 h</span></div>
<div class="row odd" style="top:617px"><svg class="ed" width="18" height="16"><use href="#i-edit"/></svg><span class="c" style="left:320px">Mi.</span><span class="c" style="left:380px">25.06.2025</span><span class="c" style="left:470px">26</span><span class="c" style="left:715px">14:00 Uhr</span><span class="c" style="left:795px">18:30 Uhr</span><span class="c r" style="left:985px">0:00 h</span><span class="c" style="left:1085px">4:30 h</span><span class="c r" style="left:1185px">- 4:30 h</span><span class="c r" style="left:1385px">- 608:51 h</span></div>
<div class="row even" style="top:645px"><svg class="ed" width="18" height="16"><use href="#i-edit"/></svg><span class="c" style="left:320px">Do.</span><span class="c" style="left:380px">26.06.2025</span><span class="c" style="left:470px">26</span><span class="c" style="left:715px">8:30 Uhr</span><span class="c" style="left:795px">19:30 Uhr</span><span class="c r" style="left:985px">0:00 h</span><span class="c" style="left:1085px">10:00 h</span><span class="c r" style="left:1185px">- 10:00 h</span><span class="c r" style="left:1385px">- 618:51 h</span></div>
<div class="row odd" style="top:673px"><svg class="ed" width="18" height="16"><use href="#i-edit"/></svg><span class="c" style="left:320px">Fr.</span><span class="c" style="left:380px">27.06.2025</span><span class="c" style="left:470px">26</span><span class="c" style="left:715px">8:30 Uhr</span><span class="c" style="left:795px">14:00 Uhr</span><span class="c r" style="left:985px">0:00 h</span><span class="c" style="left:1085px">5:30 h</span><span class="c r" style="left:1185px">- 5:30 h</span><span class="c r" style="left:1385px">- 624:21 h</span></div>
<div class="row even" style="top:701px"><svg class="ed" width="18" height="16"><use href="#i-edit"/></svg><span class="c" style="left:320px">Sa.</span><span class="c" style="left:380px">28.06.2025</span><span class="c" style="left:470px">26</span><span class="c g" style="left:985px">0:00 h</span><span class="c g" style="left:1185px">+ 0:00 h</span><span class="c r" style="left:1385px">- 624:21 h</span></div>
<div class="row odd" style="top:729px"><svg class="ed" width="18" height="16"><use href="#i-edit"/></svg><span class="c" style="left:320px">So.</span><span class="c" style="left:380px">29.06.2025</span><span class="c" style="left:470px">26</span><span class="c g" style="left:985px">0:00 h</span><span class="c g" style="left:1185px">+ 0:00 h</span><span class="c r" style="left:1385px">- 624:21 h</span></div>
<div class="row even" style="top:757px"><svg class="ed" width="18" height="16"><use href="#i-edit"/></svg><span class="c" style="left:320px">Mo.</span><span class="c" style="left:380px">30.06.2025</span><span class="c" style="left:470px">27</span><span class="c g" style="left:985px">0:00 h</span><span class="c g" style="left:1185px">+ 0:00 h</span><span class="c r" style="left:1385px">- 624:21 h</span></div>
</div>
<!-- vertical scrollbar -->
<div class="sbar" style="left:1438px;top:76px;width:15px;height:709px"></div>
<div class="thumb" style="left:1441px;top:580px;width:9px;height:187px"></div>
<!-- horizontal scrollbars -->
<div class="sbar" style="left:249px;top:785px;width:1204px;height:15px"></div>
<div style="position:absolute;left:308px;top:785px;width:1px;height:15px;background:#d0d0d0"></div>
<div class="thumb" style="left:327px;top:788px;width:728px;height:9px"></div>
<svg style="position:absolute;left:0;top:0" width="1459" height="824"><path d="M1445.5 82 L1449 87 L1442 87 Z" fill="#8f8f8f" stroke="#8f8f8f" stroke-width="2" stroke-linejoin="round"/><path d="M1442 775 L1449 775 L1445.5 780 Z" fill="#8f8f8f" stroke="#8f8f8f" stroke-width="2" stroke-linejoin="round"/><path d="M254.5 792.5 L259.5 789 L259.5 796 Z" fill="#979797" stroke="#979797" stroke-width="2" stroke-linejoin="round"/><path d="M297.5 789 L302.5 792.5 L297.5 796 Z" fill="#979797" stroke="#979797" stroke-width="2" stroke-linejoin="round"/><path d="M314.5 792.5 L319.5 789 L319.5 796 Z" fill="#979797" stroke="#979797" stroke-width="2" stroke-linejoin="round"/><path d="M1427.5 789 L1432.5 792.5 L1427.5 796 Z" fill="#979797" stroke="#979797" stroke-width="2" stroke-linejoin="round"/></svg>
<div style="position:absolute;left:1438px;top:785px;width:15px;height:15px;background:#fff"></div>
<!-- tabs -->
<div class="tab first" style="left:253px;width:119px"><svg style="left:10px" width="16" height="16" viewBox="0 0 16 16"><use href="#i-clock"/></svg><span style="left:29px">Stempelungen</span></div>
<div class="tab" style="left:372px;width:101px"><svg style="left:10px" width="16" height="16" viewBox="0 0 16 16"><use href="#i-table2"/></svg><span style="left:29px">Buchungen</span></div>
<div class="tab" style="left:473px;width:137px"><svg style="left:10px" width="16" height="16" viewBox="0 0 16 16"><use href="#i-calc"/></svg><span style="left:29px">Zeitkontokorrektur</span></div>
<div class="tab" style="left:610px;width:162px"><svg style="left:9px" width="17" height="16" viewBox="0 0 17 16"><use href="#i-comments2"/></svg><span style="left:29px">Kommentarbuchungen</span></div>
<div class="tab last" style="left:772px;width:94px"><svg style="left:9px" width="17" height="16" viewBox="0 0 17 16"><use href="#i-cup"/></svg><span style="left:29px">Lohnarten</span></div>
</div>
<div id="menu">
<div class="hi"></div>
<div class="sep" style="top:74px"></div><div class="sep" style="top:269px"></div>
<svg class="ic" style="top:6px" viewBox="0 0 16 16"><use href="#i-table2" width="16" height="16"/></svg><div class="it" style="top:5px">Neue Buchung</div>
<svg class="ic" style="top:30px" viewBox="0 0 16 16"><use href="#i-table2" width="16" height="16"/></svg><div class="it" style="top:29px">Neue Serienbuchung</div>
<svg class="ic" style="top:54px" viewBox="0 0 16 16"><use href="#i-users" width="16" height="16"/></svg><div class="it" style="top:53px">Mitarbeiter öffnen</div>
<svg class="ic" style="top:81px" viewBox="0 0 16 16"><use href="#i-house" width="16" height="16"/></svg><div class="it" style="top:80px">Urlaub eintragen</div>
<svg class="ic" style="top:105px" viewBox="0 0 16 16"><use href="#i-user" width="16" height="16"/></svg><div class="it" style="top:104px">Abwesenheit eintragen</div>
<svg class="ic" style="top:129px" viewBox="0 0 16 16"><use href="#i-clockdel" width="16" height="16"/></svg><div class="it" style="top:128px">Krankheit eintragen</div>
<svg class="ic" style="top:153px" viewBox="0 0 16 16"><use href="#i-calc" width="16" height="16"/></svg><div class="it" style="top:152px">Zeitkorrektur eintragen</div>
<svg class="ic" style="top:177px" viewBox="0 0 16 16"><use href="#i-clock" width="16" height="16"/></svg><div class="it" style="top:176px">Zeitmodellkorrektur eintragen</div>
<svg class="ic" style="top:201px" viewBox="0 0 16 16"><use href="#i-alarmpause" width="16" height="16"/></svg><div class="it" style="top:200px">Automatische Pausen korrigieren</div>
<svg class="ic" style="top:225px" viewBox="0 0 16 16"><use href="#i-star" width="16" height="16"/></svg><div class="it" style="top:224px">Zeitmodelländerung anlegen</div>
<svg class="ic" style="top:249px" viewBox="0 0 16 16"><use href="#i-comments2" width="16" height="16"/></svg><div class="it" style="top:248px">Kommentarbuchung eintragen</div>
<svg class="ic" style="top:276px" viewBox="0 0 16 16"><use href="#i-del" width="16" height="16"/></svg><div class="it" style="top:275px">Tag löschen</div>
</div>
<svg id="anno" width="1459" height="824" viewBox="0 0 1459 824">
 <g fill="rgba(255,170,4,.2)" stroke="#ff5500" stroke-width="2.3">
  <rect x="21.2" y="107.6" width="155.8" height="37.2"/>
  <rect x="293.8" y="475" width="201" height="28"/>
  <rect x="491.8" y="757.7" width="138.4" height="30.2"/>
 </g>
 <g fill="#ff5500">
  <path d="M175.3 142.4 L293 466.7 L290.4 467.7 L173.5 143 Z"/>
  <path d="M294.4 475.2 L286.8 468.9 L296.3 465.2 Z"/>
  <path d="M442.6 505 L494.4 750" fill="none" stroke="#ff5500" stroke-width="1.9"/>
  <path d="M496 757.2 L490.2 748.6 L499.2 747 Z"/>
 </g>
</svg>
</body></html>
